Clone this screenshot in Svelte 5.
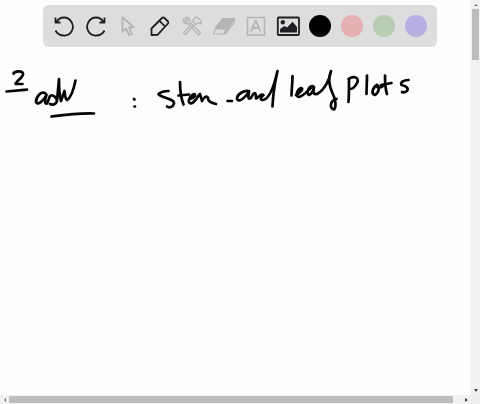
<script>
  let tool = $state('pen');
  let color = $state('black');

  const tools = [
    { id: 'undo', label: 'Undo' },
    { id: 'redo', label: 'Redo' },
    { id: 'select', label: 'Select', muted: true },
    { id: 'pen', label: 'Pen' },
    { id: 'tools', label: 'Tools', muted: true },
    { id: 'eraser', label: 'Eraser', muted: true },
    { id: 'text', label: 'Text box', muted: true },
    { id: 'image', label: 'Image' }
  ];

  const colors = [
    { id: 'black', value: '#000000' },
    { id: 'pink', value: '#e6b0b2' },
    { id: 'green', value: '#b7ccb3' },
    { id: 'violet', value: '#b7aee4' }
  ];

  const strokes = [
    'M13.500 73.500C15 71 22 70.500 23 73.500C24 77 16 81 15.500 84L22.500 84',
    'M6.500 91.500L27 89.700',
    'M46.500 94.500C42 89 36 97 36 102C38 107 45 98 46.500 95C45 99 44 104 47 103.500L50 96C53 94 57 98 57 101C56 105 52 105 50 104M57 100C58 92 58.500 84 59 79C59 87 59 95 61 101L64.500 91C65 94 65 99 67 100C72 97 74 88 75.500 80.500',
    'M51.500 116.500C63 115 78 113 94 113.500',
    'M134 99L134.500 99.500M134.500 106.500L135 106.500',
    'M168.500 91C165 91 161 92 158.500 94C160 98 174 98 174 103.500C173 107.500 169 108 167 106.500',
    'M180 82C180 90 181 98 183.500 104.500M178.500 95.500L189 94.500',
    'M190 99C195 98 197 93 193 94.500C189 97 187 103 191 103.500C196 102 198 95 200 94L202 101C204 97 207 95 208 98C208 102 212 103 216 104',
    'M227.500 101L232 101',
    'M249 91C244 90 237 94 237 99C239 104 247 95 249 92C248 97 248 100 251 98C254 92 256 91 256 98.500C259 97 261 93 263.500 95C260 98 260 100 263 100C270 99 275 82 277.500 71C275 82 273 94 272.500 106.500',
    'M292.500 76C292.500 83 291.500 90 291.500 95.500M296 95C301 92 304 88 301 88C297 89 295 97 299 97C304 96 308 90 313 86C308 86 306 94 309 95C312 94 314 89 314 87C313 92 313 95 317 94C325 90 330 78 331 71C328 78 329 85 332 92C335 98 337 106 334 109.500C330 109 329 101 336.500 99',
    'M349 80C349 87 349 95 348.500 102M348.500 79C354 75 360 78 357 83C355 87 352 89 350 89',
    'M367 75.500C367 83 366.500 88 366.500 94',
    'M377 85C372 88 371 94 375 95C379 93 380 86 377 85C376 88 381 89 384 85',
    'M385 75.500C385 83 385.500 90 387 94M381 85L391.500 83',
    'M408.500 80C404 80 400 82 401.500 85C406 86 409 88 407 91C405 92.500 403 92.500 402 92'
  ];
</script>

{#snippet icon(id)}
  <svg viewBox="0 0 24 24" width="24" height="24" aria-hidden="true">
    {#if id === 'undo' || id === 'redo'}
      <g transform={id === 'redo' ? 'translate(24 0) scale(-1 1)' : undefined}>
        <path d="M3.500 3.500V8.500H8.500M4.500 8C8 2 16 2 19.500 8C23.500 15 18 22 12 21.500C8 21.500 5 19.500 3.500 16.500" />
      </g>
    {:else if id === 'select'}
      <path d="M6.500 3.500V17.500L10 14.500L13 21L15.800 19.700L13 13.500L17.500 13Z" />
    {:else if id === 'pen'}
      <path d="M3.500 21V14.500L14.500 3.500Q15.500 3 16.500 4L20 7.500Q20.800 8.500 20 9.500L9.500 20.800ZM11.500 6.800L17 12.500" />
    {:else if id === 'tools'}
      <path d="M5 3.500L8 6.500L6.500 8L3.500 5.200C2.500 8 5 10.500 8 9.500L18.500 21L20.500 19L10 8.500C10.500 5 8 3 5 3.500" stroke-width="1.300" />
      <path d="M13.500 5L16.500 3L21 6.500V10L18 8.800L16 10.500L13 7.700ZM15 10L5.500 20.500L3.500 18.500L9 13" stroke-width="1.300" />
    {:else if id === 'eraser'}
      <path d="M10.500 5H22.500L15 14.500H3.500Z" fill="currentColor" />
      <path d="M3.500 14.500L1.500 20H11.500L22.500 5.500L22 9L13 20H11.500L14.500 14.500Z" stroke-width="1.200" />
    {:else if id === 'text'}
      <rect x="3.500" y="3.500" width="17" height="17.500" stroke-width="1.600" />
      <path d="M7 17.500L11.800 6.500L16.500 17.500M9 14H15" stroke-width="1.800" />
    {:else}
      <rect x="1.800" y="3.500" width="21.200" height="17.500" rx="1" stroke-width="1.800" />
      <circle cx="6.800" cy="8.300" r="2.200" fill="currentColor" stroke="none" />
      <path d="M4 18.500V15L8.500 12L11 13.500L16.500 7.800L21 13V18.500Z" fill="currentColor" stroke="none" />
    {/if}
  </svg>
{/snippet}

<main class="app">
  <section class="board" aria-label="Whiteboard">
    <svg class="ink" role="img" aria-label="2 adW : stem and leaf plots">
      {#each strokes as d}
        <path {d} />
      {/each}
    </svg>
  </section>

  <div class="scroll vertical">
    <button class="arrow" aria-label="Scroll up"><i class="up"></i></button>
    <div class="track"><div class="thumb"></div></div>
    <button class="arrow" aria-label="Scroll down"><i class="down"></i></button>
  </div>

  <div class="scroll horizontal">
    <button class="arrow" aria-label="Scroll left"><i class="left"></i></button>
    <div class="track"><div class="thumb"></div></div>
    <button class="arrow" aria-label="Scroll right"><i class="right"></i></button>
  </div>
  <div class="corner"></div>

  <div class="overlay">
    <div class="toolbar" role="toolbar" aria-label="Drawing tools">
      {#each tools as t}
        <button
          class="tool"
          class:muted={t.muted}
          aria-label={t.label}
          aria-pressed={tool === t.id}
          onclick={() => (tool = t.id)}>{@render icon(t.id)}</button>
      {/each}
      {#each colors as c}
        <button
          class="tool"
          aria-label={c.id}
          aria-pressed={color === c.id}
          onclick={() => (color = c.id)}><span class="swatch" style="background: {c.value}"></span></button>
      {/each}
    </div>
  </div>
</main>

<style>
  .app {
    position: relative;
    display: grid;
    grid-template: minmax(0, 1fr) 9px / minmax(0, 1fr) 9px;
    height: 100vh;
    overflow: hidden;
    background: #fdfdfd;
    font-family: "Liberation Sans", sans-serif;
  }

  .board {
    min-height: 0;
    overflow: hidden;
  }

  .ink {
    display: block;
    width: 100%;
    height: 100%;
    fill: none;
    stroke: #050505;
    stroke-width: 2.7;
    stroke-linecap: round;
    stroke-linejoin: round;
  }

  .overlay {
    position: absolute;
    top: 5px;
    left: 0;
    right: 0;
    display: flex;
    justify-content: center;
    pointer-events: none;
  }

  .toolbar {
    display: flex;
    padding: 5px;
    border-radius: 6px;
    background: #dddddd;
    pointer-events: auto;
  }

  button {
    display: flex;
    align-items: center;
    justify-content: center;
    padding: 0;
    border: 0;
    background: none;
  }

  .tool {
    width: 32px;
    height: 32px;
    color: #1d1f22;
    cursor: pointer;
  }

  .tool.muted {
    color: #b5b5b5;
  }

  .tool svg {
    fill: none;
    stroke: currentColor;
    stroke-width: 1.8;
    stroke-linejoin: round;
  }

  .swatch {
    width: 22px;
    height: 22px;
    border-radius: 50%;
  }

  .scroll {
    display: flex;
    background: #f1f1f1;
  }

  .vertical {
    flex-direction: column;
  }

  .corner {
    background: #eeeeee;
  }

  .arrow {
    flex: none;
    width: 9px;
    height: 9px;
  }

  .track {
    display: flex;
    flex: 1;
  }

  .vertical .track {
    padding: 0 1px;
  }

  .horizontal .track {
    padding: 1px 0;
  }

  .thumb {
    background: #bdbdbd;
  }

  .vertical .thumb {
    width: 100%;
    height: 51px;
  }

  .horizontal .thumb {
    width: 98%;
  }

  i {
    border: 2px solid transparent;
  }

  .up {
    border-top: 0;
    border-bottom-color: #777777;
  }

  .down {
    border-bottom: 0;
    border-top: 3px solid #444444;
  }

  .left {
    border-left: 0;
    border-right-color: #777777;
  }

  .right {
    border-right: 0;
    border-left: 3px solid #444444;
  }
</style>
